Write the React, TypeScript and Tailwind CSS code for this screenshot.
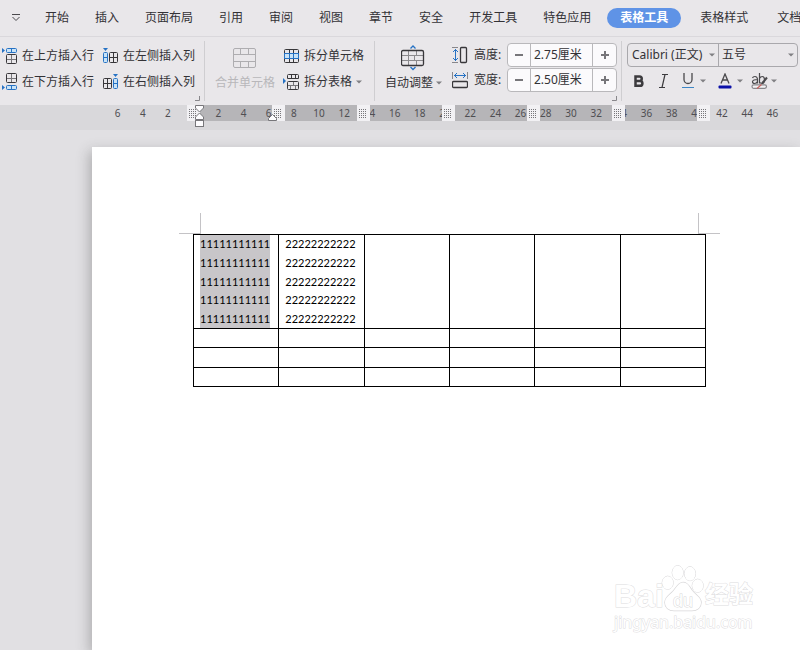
import { ReactNode } from "react";

const BLUE = "#2672c4";
const DARK = "#38373a";

const tabs = ["开始", "插入", "页面布局", "引用", "审阅", "视图", "章节", "安全", "开发工具", "特色应用", "表格工具", "表格样式", "文档"];
const rulerMarks = ["6", "4", "2", "", "2", "4", "6", "8", "10", "12", "14", "16", "18", "20", "22", "24", "26", "28", "30", "32", "34", "36", "38", "40", "42", "44", "46"];
const columnHandles = [0, 1, 2, 3, 4, 5, 6];
const lines = [0, 1, 2, 3, 4];

function InsertRowIcon({ below }: { below?: boolean }) {
  const head = below ? 12 : 1;
  const body = below ? 0 : 7;
  return (
    <svg width="18" height="18" viewBox="0 0 18 18" fill="none" className="shrink-0">
      <path d={`M2 ${head}v5l3-2.5z`} fill={BLUE} />
      <rect x="6.5" y={head + 0.5} width="10" height="4" rx="1" fill="#c9e3f7" stroke={BLUE} />
      <path d={`M11.5 ${head}v5`} stroke={BLUE} />
      <rect x="6.5" y={body + 0.5} width="10" height="9" rx="1" stroke={DARK} />
      <path d={`M11.5 ${body + 1}v8M7 ${body + 5}.5h9`} stroke="#77767a" />
    </svg>
  );
}

function InsertColumnIcon({ right }: { right?: boolean }) {
  const side = right ? 10 : 0;
  const body = right ? 0 : 6;
  return (
    <svg width="16" height="18" viewBox="0 0 16 18" fill="none" className="shrink-0">
      <path d={`M${side} 1h5l-2.5 3z`} fill={BLUE} />
      <rect x={side + 0.5} y="5.5" width="4" height="10" rx="1" fill="#c9e3f7" stroke={BLUE} />
      <path d={`M${side} 10.5h5`} stroke={BLUE} />
      <rect x={body + 0.5} y="5.5" width="8" height="10" rx="1" stroke={DARK} />
      <path d={`M${body + 4}.5 5.5v10M${body} 10.5h9`} stroke={DARK} />
    </svg>
  );
}

function MergeIcon() {
  return (
    <svg width="24" height="22" viewBox="0 0 24 22" fill="none" stroke="#aeadb0">
      <rect x="0.5" y="1.5" width="22" height="19" rx="1.5" />
      <path d="M1 7.5h21M1 14.5h21M7.5 2v5M15.5 2v5M7.5 15v5M15.5 15v5" />
    </svg>
  );
}

function SplitCellIcon() {
  return (
    <svg width="17" height="16" viewBox="0 0 17 16" fill="none" stroke={DARK} className="shrink-0">
      <rect x="1.5" y="1.5" width="14" height="13" rx="1" />
      <path d="M6.5 2v3M10.5 2v3M6.5 11v3M10.5 11v3" />
      <rect x="1.5" y="5.5" width="14" height="5" fill="#c9e3f7" stroke={BLUE} />
      <path d="M6.5 5v6M10.5 5v6" stroke={BLUE} />
    </svg>
  );
}

function SplitTableIcon() {
  return (
    <svg width="17" height="18" viewBox="0 0 17 18" fill="none" stroke={DARK} className="shrink-0">
      <path d="M0 5v6l3-3z" fill={BLUE} stroke="none" />
      <path d="M4.5 5.5v-3q0-1 1-1h9q1 0 1 1v3zM8.5 1.5v4M12.500 1.500v4" />
      <rect x="4.5" y="8.5" width="11" height="8" rx="1" />
      <path d="M5 12.5h10M10.5 9v3M7.5 13v3M12.5 13v3" stroke="#77767a" />
    </svg>
  );
}

function AutoFitIcon() {
  return (
    <svg width="24" height="26" viewBox="0 0 24 26" fill="none">
      <path d="M9.5 3.5L12 1l2.5 2.500M9.500 22L12 24.500L14.500 22" stroke={BLUE} strokeWidth="1.300" />
      <path d="M1 10.5h21M1 15.5h21M7.5 6v9M15.5 6v4M13.5 11v4M7.5 16v4M15.5 16v4" stroke="#8b8a8d" />
      <rect x="0.5" y="5.5" width="22" height="15" rx="1.5" stroke={DARK} strokeWidth="1.300" />
    </svg>
  );
}

function HeightIcon() {
  return (
    <svg width="16" height="18" viewBox="0 0 16 18" fill="none">
      <path d="M0 1.5h6M0 16.5h6" stroke="#88878b" />
      <path d="M3.5 3v12M1 6l2.5-2.500L6 6M1 12l2.500 2.500L6 12" stroke={BLUE} />
      <rect x="8.5" y="1.5" width="6" height="15" rx="1" stroke={DARK} strokeWidth="1.300" />
    </svg>
  );
}

function WidthIcon() {
  return (
    <svg width="16" height="18" viewBox="0 0 16 18" fill="none">
      <path d="M0.5 1v7M15.5 1v7" stroke="#88878b" />
      <path d="M2 4.5h12M5 2L2.500 4.500L5 7M11 2l2.500 2.500L11 7" stroke={BLUE} />
      <rect x="0.5" y="10.5" width="15" height="6" rx="1" stroke={DARK} strokeWidth="1.300" />
    </svg>
  );
}

function Arrow() {
  return (
    <svg width="6" height="4" viewBox="0 0 6 4" className="shrink-0">
      <path d="M0 0.500h6L3 3.500z" fill="#808083" />
    </svg>
  );
}

function Launcher() {
  return (
    <button aria-label="更多设置" className="absolute bottom-1 right-1">
      <svg width="6" height="6" viewBox="0 0 6 6" fill="none" stroke="#88878b" className="block">
        <path d="M5.5 1v4.500H1" />
      </svg>
    </button>
  );
}

function Group({ children, className }: { children: ReactNode; className: string }) {
  return <div className={`relative flex shrink-0 items-start ${className}`}>{children}</div>;
}

function Divider() {
  return <div className="my-1 w-px shrink-0 bg-[#cfced1]" />;
}

function SizeField({ id, label, value, icon }: { id: string; label: string; value: string; icon: ReactNode }) {
  return (
    <div className="flex h-6 items-center">
      {icon}
      <label htmlFor={id} className="ml-1.5 w-[33px] whitespace-nowrap">{label}</label>
      <div className="flex h-6 w-[110px] overflow-hidden rounded border border-[#b9b8bb] bg-[#fbfafc]">
        <button aria-label={`减少${label}`} className="flex w-[22px] items-center justify-center">
          <span className="h-0.5 w-2 bg-[#77767a]" />
        </button>
        <input id={id} defaultValue={value} className="w-[63px] min-w-0 border-x border-[#b9b8bb] px-[3px] outline-none" />
        <button aria-label={`增加${label}`} className="flex flex-1 items-center justify-center">
          <svg width="8" height="8" viewBox="0 0 8 8" stroke="#77767a" strokeWidth="2">
            <path d="M4 0v8M0 4h8" />
          </svg>
        </button>
      </div>
    </div>
  );
}

function Ribbon() {
  return (
    <div className="flex h-[69px] border-t border-[#dad8dc] bg-[#e9e7ea]">
      <Group className="w-[204px] pt-1.5">
        <div className="grid grid-cols-[103px_auto]">
          <button className="flex h-[26px] items-center gap-1 whitespace-nowrap"><InsertRowIcon />在上方插入行</button>
          <button className="flex h-[26px] items-center gap-1 whitespace-nowrap"><InsertColumnIcon />在左侧插入列</button>
          <button className="flex h-[26px] items-center gap-1 whitespace-nowrap"><InsertRowIcon below />在下方插入行</button>
          <button className="flex h-[26px] items-center gap-1 whitespace-nowrap"><InsertColumnIcon right />在右侧插入列</button>
        </div>
        <Launcher />
      </Group>
      <Divider />
      <Group className="w-[169px] gap-2 pl-[10px] pt-1.5">
        <button disabled className="flex w-[60px] flex-col items-center gap-1.5 whitespace-nowrap pt-1 text-[#b8b7ba]">
          <MergeIcon />
          合并单元格
        </button>
        <div>
          <button className="flex h-[26px] items-center gap-1 whitespace-nowrap"><SplitCellIcon />拆分单元格</button>
          <button className="flex h-[26px] items-center gap-1 whitespace-nowrap"><SplitTableIcon />拆分表格<Arrow /></button>
        </div>
      </Group>
      <Divider />
      <Group className="w-[246px] gap-[10px] pl-[10px] pt-1.5">
        <button className="flex w-[57px] flex-col gap-1 whitespace-nowrap pt-0.5">
          <span className="pl-4"><AutoFitIcon /></span>
          <span className="flex items-center gap-[3px]">自动调整<Arrow /></span>
        </button>
        <div className="flex flex-col gap-px">
          <SizeField id="row-height" label="高度:" value="2.75厘米" icon={<HeightIcon />} />
          <SizeField id="col-width" label="宽度:" value="2.50厘米" icon={<WidthIcon />} />
        </div>
        <Launcher />
      </Group>
      <Divider />
      <Group className="flex-1 flex-col pl-[5px] pt-1.5">
        <div className="flex h-6 w-[171px] rounded border border-[#a9a8ac]">
          <div className="relative w-[91px] border-r border-[#a9a8ac]">
            <select aria-label="字体" className="h-full w-full appearance-none pl-1 outline-none">
              <option>Calibri (正文)</option>
            </select>
            <span className="pointer-events-none absolute inset-y-0 right-[3px] flex items-center"><Arrow /></span>
          </div>
          <div className="relative flex-1">
            <select aria-label="字号" className="h-full w-full appearance-none pl-[3px] outline-none">
              <option>五号</option>
            </select>
            <span className="pointer-events-none absolute inset-y-0 right-[3px] flex items-center"><Arrow /></span>
          </div>
        </div>
        <div className="flex h-7 items-center pl-[6px]">
          <button aria-label="加粗" className="w-3">
            <svg width="12" height="14" viewBox="0 0 12 14" fill="none" stroke="#3c3b3e" strokeWidth="2.500">
              <path d="M2.500 2.500h4a2.200 2.200 0 0 1 0 4.500h-4zM2.500 7h4.500a2.300 2.300 0 0 1 0 4.800h-4.500z" />
            </svg>
          </button>
          <button aria-label="倾斜" className="ml-[14px]">
            <svg width="10" height="16" viewBox="0 0 10 16" fill="none" stroke="#3c3b3e" strokeWidth="1.200">
              <path d="M3 1.500h6M0 14.500h6M6 1.500L3 14.500" />
            </svg>
          </button>
          <button aria-label="下划线" className="ml-3 flex items-center gap-[5px]">
            <svg width="14" height="16" viewBox="0 0 14 16" fill="none">
              <path d="M3 0v6.500a4 4 0 0 0 8 0V0" stroke="#4a494c" strokeWidth="1.300" />
              <path d="M1 14.500h12" stroke="#3d86c6" />
            </svg>
            <Arrow />
          </button>
          <button aria-label="字体颜色" className="ml-3 flex items-center gap-[5px]">
            <svg width="14" height="16" viewBox="0 0 14 16" fill="none">
              <path d="M3 10.500L7 1l4 9.500M4.500 7h5" stroke="#4a494c" strokeWidth="1.300" />
              <rect x="0.500" y="12.500" width="13" height="3" rx="1" fill="#0b10a8" />
            </svg>
            <Arrow />
          </button>
          <button aria-label="突出显示" className="ml-2 flex items-center gap-[3px]">
            <svg width="17" height="18" viewBox="0 0 17 18" fill="none" stroke="#4a494c" strokeWidth="1.200">
              <path d="M1.500 6q.5-1.500 2.500-1.500T6.500 7v4.500M6.500 7.500q-5 0-5 2.300 0 1.700 2 1.700T6.500 9.500" />
              <path d="M8.500 1V11.500M8.500 6.500q1-2 2.800-2Q13.500 4.500 13.500 8T11 11.500q-1.500 0-2.500-1.500" />
              <path d="M16 5.500L11 11.500" strokeWidth="2" />
              <rect x="1" y="12.800" width="14.500" height="3.500" rx="1.700" fill="#f4f3f5" stroke="#88878b" />
              <path d="M6 16.500l4.500-4" stroke="#c9615f" />
            </svg>
            <Arrow />
          </button>
        </div>
      </Group>
    </div>
  );
}

function Ruler() {
  return (
    <div className="relative h-[25px] overflow-hidden bg-[#d9d8db] text-[10px] text-[#4f4e52]">
      <div className="absolute left-[199px] top-0 h-4 w-[500px] bg-[#b6b5b8]" />
      <div className="relative ml-[105px] flex h-4 w-[680px]">
        {rulerMarks.map((mark, i) => (
          <span key={i} className="flex-1 text-center leading-4">{mark}</span>
        ))}
      </div>
      <div className="absolute left-[187px] top-0 flex w-[595px]">
        {columnHandles.map((handle) => (
          <span key={handle} className="flex-1">
            <svg width="13" height="16" viewBox="0 0 13 16">
              <path d="M0 0h13v16H0z" fill="#f2f1f4" />
              <path d="M2 4.500h8M2 6.500h8M2 8.500h8M2 10.500h8M2 12.500h8" stroke="#77767a" strokeDasharray="1 1" />
            </svg>
          </span>
        ))}
      </div>
      <svg width="10" height="22" viewBox="0 0 10 22" fill="#fdfcfe" stroke="#77767a" className="absolute left-[194px] top-0">
        <path d="M1.500 0.500h8v2.500l-4 4-4-4zM5.500 8l4 4v2.500h-8V12z" />
        <rect x="1.500" y="15.500" width="8" height="6" />
      </svg>
      <svg width="10" height="8" viewBox="0 0 10 8" fill="#fdfcfe" stroke="#77767a" className="absolute left-[268px] top-2">
        <path d="M4.500 1.500l4 4v2h-8v-2z" />
      </svg>
    </div>
  );
}

function Watermark() {
  return (
    <div className="absolute bottom-[18px] right-[40px] w-[146px] font-['Liberation_Sans','Noto_Sans_CJK_SC',sans-serif] text-white [-webkit-text-stroke:1px_#dddcde] [paint-order:stroke]">
      <div className="flex items-end">
        <span className="w-[47px] text-[32px] font-bold leading-8">Bai</span>
        <svg width="44" height="48" viewBox="0 0 44 48" fill="#fff" stroke="#d8d7d9" className="shrink-0">
          <ellipse cx="6.700" cy="18.700" rx="5.500" ry="6.500" />
          <ellipse cx="16.700" cy="8.700" rx="5.500" ry="7" />
          <ellipse cx="29" cy="9.700" rx="5.500" ry="7" />
          <ellipse cx="36.700" cy="21.700" rx="5.500" ry="6.500" />
          <path d="M22 18.500c5 0 6 4 9 8 4 5 9 7 9 12 0 5-4 8-9 8H13c-5 0-9-3-9-8 0-5 4-7 8-11 4-5 6-9 10-9z" strokeWidth="1.500" />
          <text x="22" y="43" textAnchor="middle" fontSize="18">du</text>
        </svg>
        <span className="text-[24px] font-bold leading-[34px]">经验</span>
      </div>
      <div className="font-['Noto_Sans',sans-serif] text-[16px] leading-5">jingyan.baidu.com</div>
    </div>
  );
}

function Page() {
  return (
    <div className="relative ml-[92px] mt-[17px] flex-1 bg-white pt-[66px] shadow-[-3px_4px_12px_rgba(60,60,60,0.3)]">
      <div className="ml-[87px] flex w-[541px] justify-between">
        <div className="h-[21px] w-[22px] border-b border-r border-[#c4c3c6]" />
        <div className="h-[21px] w-[22px] border-b border-l border-[#c4c3c6]" />
      </div>
      <table className="ml-[101px] w-[513px] table-fixed border-collapse font-['Lato',sans-serif] text-[11px] text-black">
        <tbody>
          <tr className="h-[94px]">
            <td className="border border-black p-0 pl-[6px]">
              <div className="flex h-[93px] w-[70px] flex-col justify-between bg-[#c8c6c9]">
                {lines.map((line) => <span key={line} className="leading-[18px]">11111111111</span>)}
              </div>
            </td>
            <td className="border border-black p-0 pl-[6px]">
              <div className="flex h-[93px] w-[70px] flex-col justify-between">
                {lines.map((line) => <span key={line} className="leading-[18px]">22222222222</span>)}
              </div>
            </td>
            {[2, 3, 4, 5].map((col) => <td key={col} className="border border-black" />)}
          </tr>
          {[1, 2, 3].map((row) => (
            <tr key={row} className={row === 2 ? "h-5" : "h-[19px]"}>
              {[0, 1, 2, 3, 4, 5].map((col) => <td key={col} className="border border-black p-0" />)}
            </tr>
          ))}
        </tbody>
      </table>
      <Watermark />
    </div>
  );
}

export default function App() {
  return (
    <div className="flex min-h-screen flex-col overflow-hidden bg-[#e1e0e3] font-['Noto_Sans','Noto_Sans_CJK_SC',sans-serif] text-xs text-[#333236]">
      <nav className="flex h-9 items-center overflow-hidden bg-[#e9e7ea]">
        <button aria-label="更多" className="flex w-8 shrink-0 justify-center">
          <svg width="8" height="8" viewBox="0 0 8 8" fill="none" stroke="#4a494c">
            <path d="M0 0.500h8M0.500 3L4 6.500L7.500 3" />
          </svg>
        </button>
        {tabs.map((tab) => (
          <button
            key={tab}
            className={`h-5 shrink-0 px-[13px] ${tab === "表格工具" ? "mx-[3px] rounded-full bg-[#5f93e6] font-bold text-white" : ""} ${tab === "表格样式" || tab === "文档" ? "ml-[3px]" : ""}`}
          >
            {tab}
          </button>
        ))}
      </nav>
      <Ribbon />
      <Ruler />
      <Page />
    </div>
  );
}
